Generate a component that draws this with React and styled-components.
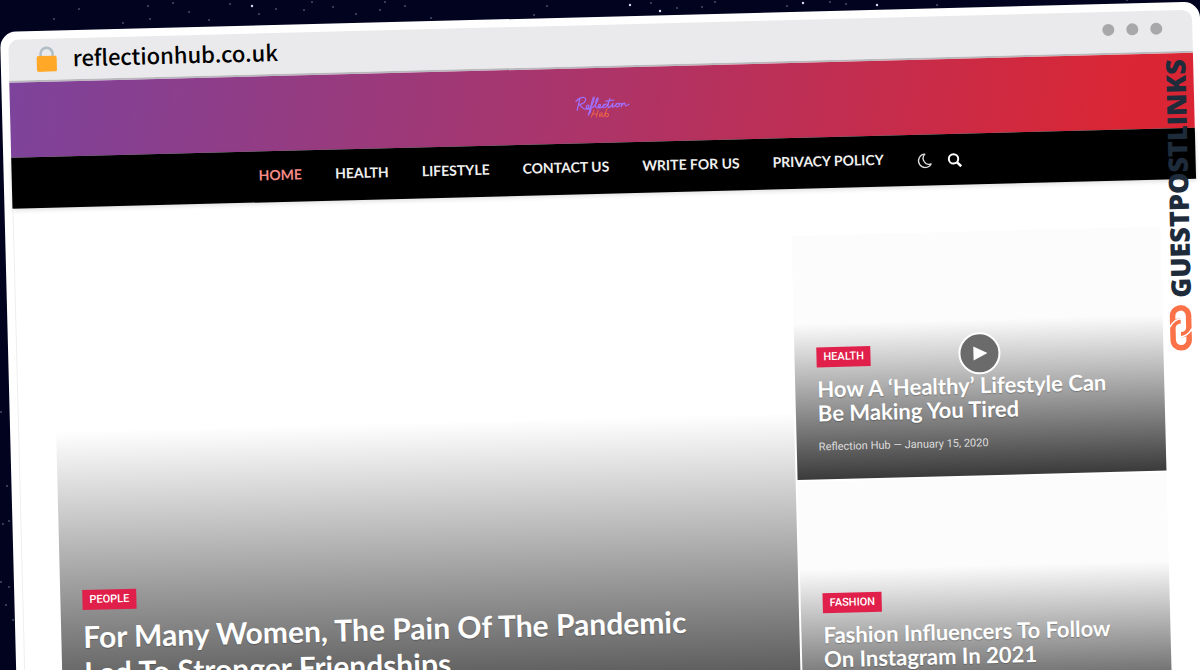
import React from 'react';
import styled, { createGlobalStyle } from 'styled-components';

const display = "Lato, 'Open Sans', sans-serif";

const GlobalStyle = createGlobalStyle`
  * { box-sizing: border-box; }
  body { margin: 0; background: #01031f; font-family: Roboto, sans-serif; }
  a { color: inherit; text-decoration: none; }
  h2 { margin: 0; }
`;

const Stage = styled.div`
  position: relative;
  height: 100vh;
  padding-top: 32px;
  overflow: hidden;
  background: #01031f;
`;

const Sky = styled.svg`
  position: absolute;
  top: 0;
  left: 0;
`;

const BrowserWindow = styled.div`
  position: relative;
  padding: 8px;
  border-radius: 16px;
  background: #fff;
  transform: rotate(-1.45deg);
  transform-origin: top left;
`;

const AddressBar = styled.header`
  display: flex;
  align-items: center;
  gap: 15px;
  height: 43px;
  padding: 0 30px 2px 27px;
  border-bottom: 2px solid #b9b9bd;
  border-radius: 10px 10px 0 0;
  background: #eaeaec;
`;

const Address = styled.span`
  flex: 1;
  padding-bottom: 4px;
  font: 500 22px/32px 'Noto Sans CJK SC', 'Noto Sans', sans-serif;
  color: #000;
`;

const Dots = styled.div`
  display: flex;
  gap: 12px;
  padding-bottom: 4px;
`;

const Dot = styled.span`
  width: 12px;
  height: 12px;
  border-radius: 50%;
  background: #a8a8ab;
`;

const Banner = styled.div`
  display: flex;
  align-items: center;
  justify-content: center;
  height: 75px;
  background: linear-gradient(100deg, #7d439b, #ad3468 50%, #da2634 94%);
`;

const Nav = styled.nav`
  display: flex;
  align-items: center;
  justify-content: center;
  gap: 33px;
  height: 51px;
  padding-left: 14px;
  background: #000;
  box-shadow: 0 2px 4px rgba(0, 0, 0, 0.12);
`;

const NavLink = styled.a`
  padding-bottom: 4px;
  font: 700 14px/20px ${display};
  color: ${(p) => (p.$active ? '#f58a87' : '#efefef')};
`;

const Tools = styled.div`
  display: flex;
  gap: 14px;
`;

const ToolButton = styled.button`
  display: flex;
  padding: 0;
  border: 0;
  background: none;
`;

const Featured = styled.main`
  display: grid;
  grid-template-columns: 2fr 1fr;
  grid-template-rows: 244px 244px;
  gap: 2px;
  padding: 47px 37px 40px;
  border-left: 1px solid #eee;
`;

const Card = styled.article`
  position: relative;
  display: flex;
  flex-direction: column;
  align-items: flex-start;
  justify-content: flex-end;
  grid-row: ${(p) => (p.$large ? 'span 2' : 'auto')};
  padding: 22px;
  background-color: ${(p) => (p.$large ? '#fff' : '#fcfcfc')};
  background-image: linear-gradient(to bottom, transparent 36%, rgba(0, 0, 0, 0.77));
  background-repeat: no-repeat;
  color: #fff;
`;

const Category = styled.a`
  padding: 0 7px;
  background: #e0204a;
  font: 500 11px/20px Roboto, sans-serif;
  text-transform: uppercase;
`;

const Title = styled.h2`
  margin: ${(p) => (p.$large ? '8px 0 12px' : '10px 0 12px')};
  font: ${(p) => (p.$large ? '700 30px/36px' : '700 22px/24px')} ${display};
  text-shadow: 0 1px 1px rgba(0, 0, 0, 0.25);
`;

const Meta = styled.div`
  font-size: 11px;
  line-height: 20px;
  color: #dedede;
`;

const Play = styled.button`
  position: absolute;
  top: 50%;
  left: 50%;
  display: flex;
  align-items: center;
  justify-content: center;
  width: 42px;
  height: 42px;
  padding: 0;
  border: 2px solid #fff;
  border-radius: 50%;
  background: #6b6b6b;
  transform: translate(-50%, -50%);
`;

const Sponsor = styled.a`
  position: absolute;
  top: 57px;
  right: 13px;
  display: flex;
  align-items: center;
  gap: 6px;
  writing-mode: vertical-rl;
  transform: rotate(180deg);
  font: 800 27px/27px 'Open Sans', sans-serif;
  color: #1d2b3a;
`;

const stars = [
  [79, 9], [54, 19], [148, 6], [150, 19], [123, 23], [189, 12], [173, 3], [276, 9], [230, 4], [259, 14],
  [209, 20], [1, 412], [7, 486], [3, 524], [9, 521], [1, 582], [9, 587], [6, 605], [13, 620], [312, 2], [333, 7],
  [304, 10], [356, 14], [380, 10], [385, 2], [405, 6], [431, 18], [534, 15], [547, 6], [677, 8], [702, 7], [715, 2],
  [651, 3], [787, 6], [830, 2], [846, 4], [937, 5], [1127, 0],
];

const brightStars = [[252, 6], [630, 5], [660, 11], [803, 3], [877, 5]];

const links = ['Home', 'Health', 'Lifestyle', 'Contact Us', 'Write For Us', 'Privacy Policy'];

function Logo() {
  return (
    <svg width="58" height="28" viewBox="0 -2 58 28" role="img" aria-label="Reflection Hub" fill="none" strokeLinecap="round" strokeLinejoin="round">
      <path
        stroke="#a070ff"
        strokeWidth="1.2"
        d="M4 16 7 4M3 7C9 1 15 3 12 7c-1 2-4 3-6 3 2 2 4 5 6 5 3 0 5-3 3-4-2 0-3 4 0 4 4-1 7-11 6-12-2 1-3 11-6 18 3-3 3-6 3-7 3 0 8-8 7-10-2 1-4 10-1 10 3 0 4-3 3-3.500-2 0-3 3.500 0 3.500 2 0 4-3 6-3.500-3-.5-4.500 3.500-2 3.500 3 0 5-6 6-9-2 5-3 9-1 9 2-1 3-3 4-4-1 3-1 4 0 3.500 2-.5 3-3.500 5-3.500-3 0-3 3.500-1 3.500 3-.5 3-3.500 1-3.500 2 1 3 0 4 0l-1 3.500c2-3.500 4-4.500 4-3 0 2.500 0 3.500 4 .5M33 7.500l8-1"
      />
      <path stroke="#ec6248" d="M21 16l-3 7m7-7-2 7m-4-3h5m3-1c-2 5 0 5 2 0-1 4 0 5 2 3l3-7c-2 5-3 8-1 8 3 0 3-4 0-3" />
    </svg>
  );
}

function ChainIcon() {
  return (
    <svg width="24" height="48" viewBox="0 0 24 48" fill="none" stroke="#fb7148" strokeWidth="5.500" aria-hidden="true">
      <path d="M4 20V12a8 8 0 0 1 16 0v12a8 7 0 0 1-8 7" />
      <path d="M20 27v9a8 8 0 0 1-16 0V24a8 7 0 0 1 8-7" />
      <path stroke="#fff" strokeWidth="1.500" d="M1 23c3-5 6-8 12-8M23 25c-3 5-6 8-12 8" />
    </svg>
  );
}

export default function App() {
  return (
    <Stage>
      <GlobalStyle />
      <Sky width="100%" height="100%" aria-hidden="true">
        {stars.map(([x, y]) => <circle key={`${x}-${y}`} cx={x} cy={y} r="0.8" fill="#7483aa" />)}
        {brightStars.map(([x, y]) => <circle key={`${x}-${y}`} cx={x} cy={y} r="1.2" fill="#d5dcf0" />)}
      </Sky>
      <BrowserWindow>
        <AddressBar>
          <svg width="22" height="26" viewBox="0 0 22 26" aria-hidden="true">
            <path d="M5 13V8a6 6 0 0 1 12 0v5" fill="none" stroke="#b0bec5" strokeWidth="2.5" />
            <rect x="1" y="10" width="20" height="16" rx="2" fill="#ffa828" />
          </svg>
          <Address>reflectionhub.co.uk</Address>
          <Dots><Dot /><Dot /><Dot /></Dots>
        </AddressBar>
        <Banner><Logo /></Banner>
        <Nav>
          {links.map((label, i) => (
            <NavLink key={label} href="#" $active={i === 0}>{label.toUpperCase()}</NavLink>
          ))}
          <Tools>
            <ToolButton aria-label="Dark mode">
              <svg width="16" height="16" viewBox="0 0 16 16" fill="none" stroke="#ddd" strokeWidth="1.3" strokeLinejoin="round">
                <path d="M8.500 1.500A6.700 6.700 0 1 0 14.500 11.500 6 6 0 0 1 8.500 1.500Z" />
              </svg>
            </ToolButton>
            <ToolButton aria-label="Search">
              <svg width="16" height="16" viewBox="0 0 16 16" fill="none" stroke="#fff" strokeWidth="2">
                <circle cx="7" cy="7" r="4.700" /><path d="m10.500 10.500 4 4" strokeWidth="2.500" />
              </svg>
            </ToolButton>
          </Tools>
        </Nav>
        <Featured>
          <Card $large>
            <Category href="#">People</Category>
            <Title $large><a href="#">For Many Women, The Pain Of The Pandemic<br />Led To Stronger Friendships</a></Title>
            <Meta>Reflection Hub — January 15, 2020</Meta>
          </Card>
          <Card>
            <Play aria-label="Play">
              <svg width="16" height="16" viewBox="0 0 16 16" fill="#fff"><path d="M2 1v14l14-7z" /></svg>
            </Play>
            <Category href="#">Health</Category>
            <Title><a href="#">How A ‘Healthy’ Lifestyle Can<br />Be Making You Tired</a></Title>
            <Meta>Reflection Hub — January 15, 2020</Meta>
          </Card>
          <Card>
            <Category href="#">Fashion</Category>
            <Title><a href="#">Fashion Influencers To Follow<br />On Instagram In 2021</a></Title>
            <Meta>Reflection Hub — January 15, 2020</Meta>
          </Card>
        </Featured>
        <Sponsor href="#">
          <ChainIcon />
          GUESTPOSTLINKS
        </Sponsor>
      </BrowserWindow>
    </Stage>
  );
}
